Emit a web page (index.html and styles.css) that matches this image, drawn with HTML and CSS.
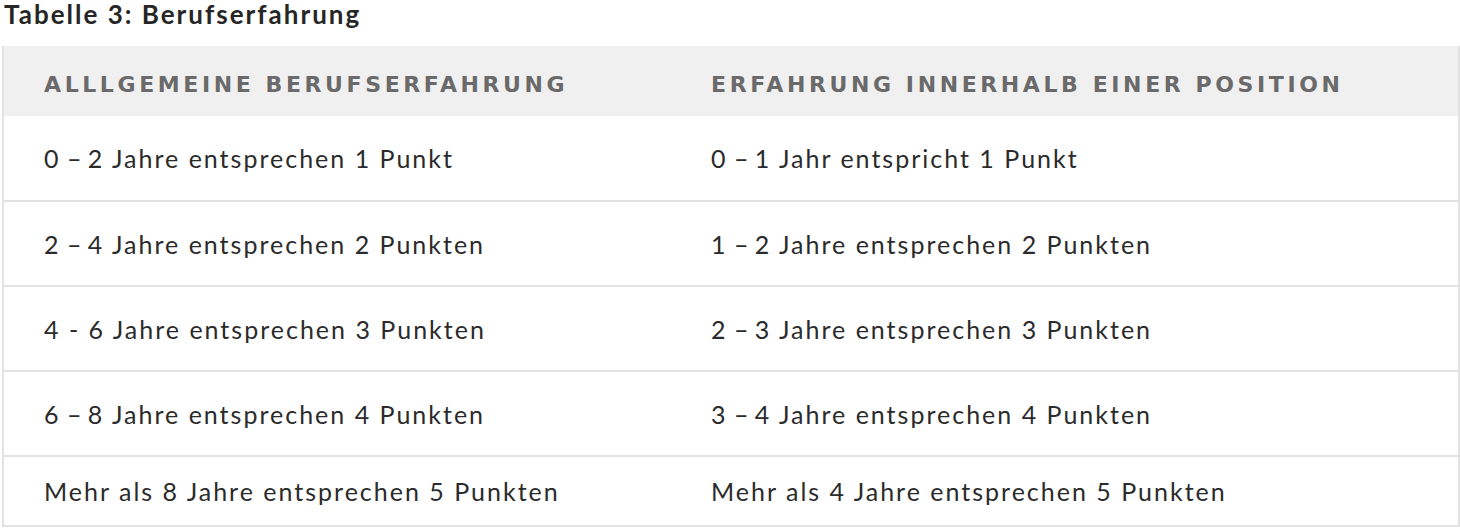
FILE: index.html
```html
<!DOCTYPE html>
<html lang="de">
<head>
<meta charset="utf-8">
<link rel="stylesheet" href="styles.css">
</head>
<body>
<div class="caption">Tabelle 3: Berufserfahrung</div>
<table class="exp">
  <thead>
    <tr>
      <th class="c1">Alllgemeine Berufserfahrung</th>
      <th class="c2">Erfahrung innerhalb einer Position</th>
    </tr>
  </thead>
  <tbody>
    <tr class="first"><td>0<span class="dash"> – </span>2 Jahre entsprechen 1 Punkt</td><td>0<span class="dash"> – </span>1 Jahr entspricht 1 Punkt</td></tr>
    <tr><td>2<span class="dash"> – </span>4 Jahre entsprechen 2 Punkten</td><td>1<span class="dash"> – </span>2 Jahre entsprechen 2 Punkten</td></tr>
    <tr><td>4 - 6 Jahre entsprechen 3 Punkten</td><td>2<span class="dash"> – </span>3 Jahre entsprechen 3 Punkten</td></tr>
    <tr><td>6<span class="dash"> – </span>8 Jahre entsprechen 4 Punkten</td><td>3<span class="dash"> – </span>4 Jahre entsprechen 4 Punkten</td></tr>
    <tr class="last"><td>Mehr als 8 Jahre entsprechen 5 Punkten</td><td>Mehr als 4 Jahre entsprechen 5 Punkten</td></tr>
  </tbody>
</table>
</body>
</html>
```
FILE: styles.css
```css
html, body {
  margin: 0;
  padding: 0;
  background: #ffffff;
}
body {
  font-family: "Lato", "Liberation Sans", sans-serif;
  color: #2b2b2b;
  width: 1460px;
}
.caption {
  font-weight: 700;
  font-size: 26px;
  line-height: 28px;
  letter-spacing: 2px;
  padding: 0 0 0 4px;
  height: 46px;
  box-sizing: border-box;
  color: #262626;
}
.exp {
  border-collapse: collapse;
  margin-left: 2px;
  width: 1458px;
  table-layout: fixed;
}
.exp th, .exp td {
  border-bottom: 2px solid #e2e2e2;
  border-left: 2px solid #e2e2e2;
  border-right: 2px solid #e2e2e2;
  text-align: left;
  vertical-align: middle;
  padding: 0 0 0 40px;
}
.exp th + th, .exp td + td {
  border-left: none;
}
.exp td:first-child, .exp th:first-child {
  border-right: none;
}
.exp th {
  background: #f0f0f0;
  height: 64px;
  padding-top: 6px;
  font-family: "DejaVu Sans", "Lato", sans-serif;
  font-size: 22px;
  font-weight: 700;
  text-transform: uppercase;
  letter-spacing: 3.6px;
  color: #6a6a6a;
  border-bottom: none;
  border-top: none;
}
.exp th.c1 {
  width: 627px;
}
.exp td {
  height: 83px;
  font-size: 25px;
  letter-spacing: 2px;
  color: #2b2b2b;
}
.exp td .dash {
  letter-spacing: 0;
}
.exp tr.first td {
  height: 84px;
}
.exp tr.last td {
  height: 68px;
}
```
